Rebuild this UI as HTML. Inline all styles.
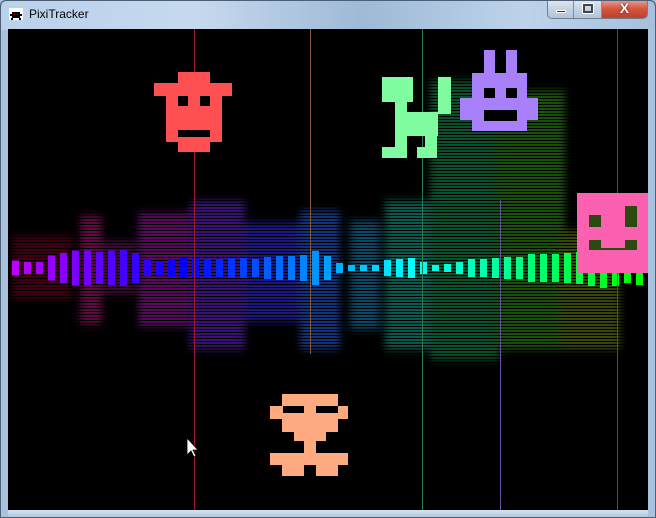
<!DOCTYPE html>
<html><head><meta charset="utf-8"><style>
*{margin:0;padding:0;box-sizing:border-box}
body{width:656px;height:518px;overflow:hidden;background:#a9c3de;font-family:"Liberation Sans",sans-serif;position:relative}
#tb{position:absolute;left:0;top:0;width:656px;height:30px;background:linear-gradient(90deg,#b9d1ea 0%,#c6d9ee 30%,#9fb9d6 55%,#bcd3ea 80%,#a6c0dc 100%);border-radius:6px 6px 0 0;border:1px solid #5a6f88;border-bottom:none}
#title{position:absolute;left:29px;top:7px;font-size:12px;color:#000}
#ico{position:absolute;left:9px;top:8px;width:14px;height:12px;background:#fff}
#btns{position:absolute;left:547px;top:0;width:101px;height:19px;border:1px solid #6e7f94;border-top:none;border-radius:0 0 5px 5px;overflow:hidden;display:flex}
.b{height:18px;background:linear-gradient(#dfe8f2,#c4d2e2 50%,#b3c4d8);border-right:1px solid #7f8fa3;position:relative}
#cl{background:linear-gradient(#e8a293,#d2553c 50%,#c0402a);border:none}
#client{position:absolute;left:8px;top:29px;width:640px;height:481px;background:#000;overflow:hidden}
#frame{position:absolute;left:0;top:0;width:656px;height:518px;border:1px solid #4c5f77;border-radius:6px 6px 0 0;pointer-events:none}
#bot{position:absolute;left:8px;top:510px;width:640px;height:8px;background:linear-gradient(#d6e3f0,#a9c3de)}
</style></head><body>
<div id="tb"></div>
<div id="ico"><svg width="14" height="12"><rect x="3" y="3" width="8" height="6" fill="#000"/><rect x="1" y="5" width="12" height="2" fill="#000"/><rect x="2" y="9" width="2" height="2" fill="#000"/><rect x="10" y="9" width="2" height="2" fill="#000"/><rect x="5" y="5" width="1" height="1" fill="#c00"/><rect x="8" y="5" width="1" height="1" fill="#c00"/></svg></div>
<div id="title">PixiTracker</div>
<div id="btns">
<div class="b" style="width:27px"><div style="position:absolute;left:8px;top:10px;width:10px;height:3px;background:#333;border:1px solid #fff"></div></div>
<div class="b" style="width:28px"><div style="position:absolute;left:9px;top:4px;width:10px;height:9px;border:2px solid #444;outline:1px solid #fff"></div></div>
<div class="b" id="cl" style="width:46px;color:#fff;font-weight:bold;font-size:14px;text-align:center;line-height:17px;text-shadow:0 0 2px #600">X</div>
</div>
<div id="client">
<svg width="640" height="481" viewBox="8 29 640 481" style="position:absolute;left:0;top:0">
<defs>
<filter id="bl" x="-20%" y="-20%" width="140%" height="140%"><feGaussianBlur stdDeviation="4"/></filter>
<pattern id="ln" width="4" height="3" patternUnits="userSpaceOnUse"><rect width="4" height="2" fill="#fff"/></pattern>
<mask id="mk"><rect x="8" y="29" width="640" height="481" fill="url(#ln)"/></mask>
</defs>
<g mask="url(#mk)" filter="url(#bl)" opacity="0.8">
<rect x="12" y="235" width="60" height="65" fill="#500018"/>
<rect x="80" y="215" width="22" height="110" fill="#781050"/>
<rect x="100" y="240" width="35" height="55" fill="#501040"/>
<rect x="138" y="212" width="52" height="115" fill="#6a1070"/>
<rect x="190" y="200" width="55" height="150" fill="#461890"/>
<rect x="245" y="222" width="55" height="100" fill="#221fa0"/>
<rect x="300" y="210" width="40" height="140" fill="#14409a"/>
<rect x="350" y="220" width="30" height="110" fill="#0f5a80"/>
<rect x="385" y="200" width="50" height="150" fill="#0f7060"/>
<rect x="430" y="80" width="70" height="280" fill="#0c6530"/>
<rect x="495" y="90" width="70" height="260" fill="#1a6510"/>
<rect x="560" y="230" width="60" height="120" fill="#465808"/>
</g>
<g id="bars"></g>
<rect x="194" y="29" width="1" height="481" fill="#a01830"/>
<rect x="310" y="29" width="1" height="325" fill="#8a5a40"/>
<rect x="422" y="29" width="1" height="481" fill="#2a7a50"/>
<rect x="500" y="200" width="1" height="310" fill="#6a50a0"/>
<rect x="617" y="29" width="1" height="481" fill="#a02070"/>
<g fill="#fe5050">
<rect x="178" y="72" width="32" height="12"/><rect x="154" y="83" width="78" height="13"/>
<rect x="166" y="95" width="56" height="47"/><rect x="178" y="141" width="32" height="11"/>
</g>
<g fill="#000"><rect x="178" y="96" width="10" height="10"/><rect x="200" y="96" width="10" height="10"/><rect x="178" y="130" width="32" height="7"/></g>
<g fill="#80fca0">
<rect x="382" y="77" width="31" height="25"/><rect x="395" y="101" width="12" height="50"/>
<rect x="395" y="112" width="43" height="24"/><rect x="438" y="77" width="13" height="37"/>
<rect x="382" y="147" width="25" height="11"/><rect x="425" y="135" width="12" height="23"/><rect x="417" y="147" width="20" height="11"/>
</g>
<g fill="#a880fc">
<rect x="484" y="50" width="11" height="25"/><rect x="506" y="50" width="11" height="25"/>
<rect x="472" y="73" width="55" height="58"/><rect x="460" y="98" width="78" height="22"/>
</g>
<g fill="#000"><rect x="484" y="88" width="11" height="10"/><rect x="506" y="88" width="11" height="10"/><rect x="484" y="110" width="33" height="11"/></g>
<rect x="577" y="193" width="71" height="80" fill="#fc60b0"/>
<g fill="#2a4a10"><rect x="589" y="215" width="12" height="12"/><rect x="625" y="206" width="12" height="21"/><rect x="589" y="240" width="48" height="10"/></g>
<g fill="#fc60b0"><rect x="601" y="240" width="24" height="8"/></g>
<g fill="#feaa80">
<rect x="282" y="394" width="56" height="12"/><rect x="270" y="406" width="78" height="13"/>
<rect x="282" y="418" width="56" height="14"/><rect x="294" y="431" width="32" height="10"/>
<rect x="304" y="440" width="12" height="14"/><rect x="270" y="453" width="78" height="12"/>
<rect x="282" y="464" width="22" height="12"/><rect x="316" y="464" width="22" height="12"/>
</g>
<g fill="#000"><rect x="283" y="406" width="21" height="7"/><rect x="316" y="406" width="22" height="7"/></g>
<path d="M187 438 L187 455 L191 451 L194 457 L196 456 L193 450 L198 450 Z" fill="#fff" stroke="#000" stroke-width="0.8"/>
</svg>
</div>
<div id="bot"></div>
<div id="frame"></div>
<script>
var h=[15,12,12,25,30,35,35,32,35,36,30,16,14,18,20,20,18,18,20,20,18,22,24,24,26,34,24,10,6,6,6,16,18,20,12,6,8,12,18,18,20,22,22,28,28,28,30,32,36,40,36,30,34];
var g=document.getElementById('bars'),s='';
for(var i=0;i<h.length;i++){var x=12+i*12;if(x>642)break;var hue=285-165*i/(h.length-1);
s+='<rect x="'+x+'" y="'+(268-h[i]/2)+'" width="7" height="'+h[i]+'" fill="hsl('+hue+',100%,50%)"/>';}
g.innerHTML=s;
</script>
</body></html>
